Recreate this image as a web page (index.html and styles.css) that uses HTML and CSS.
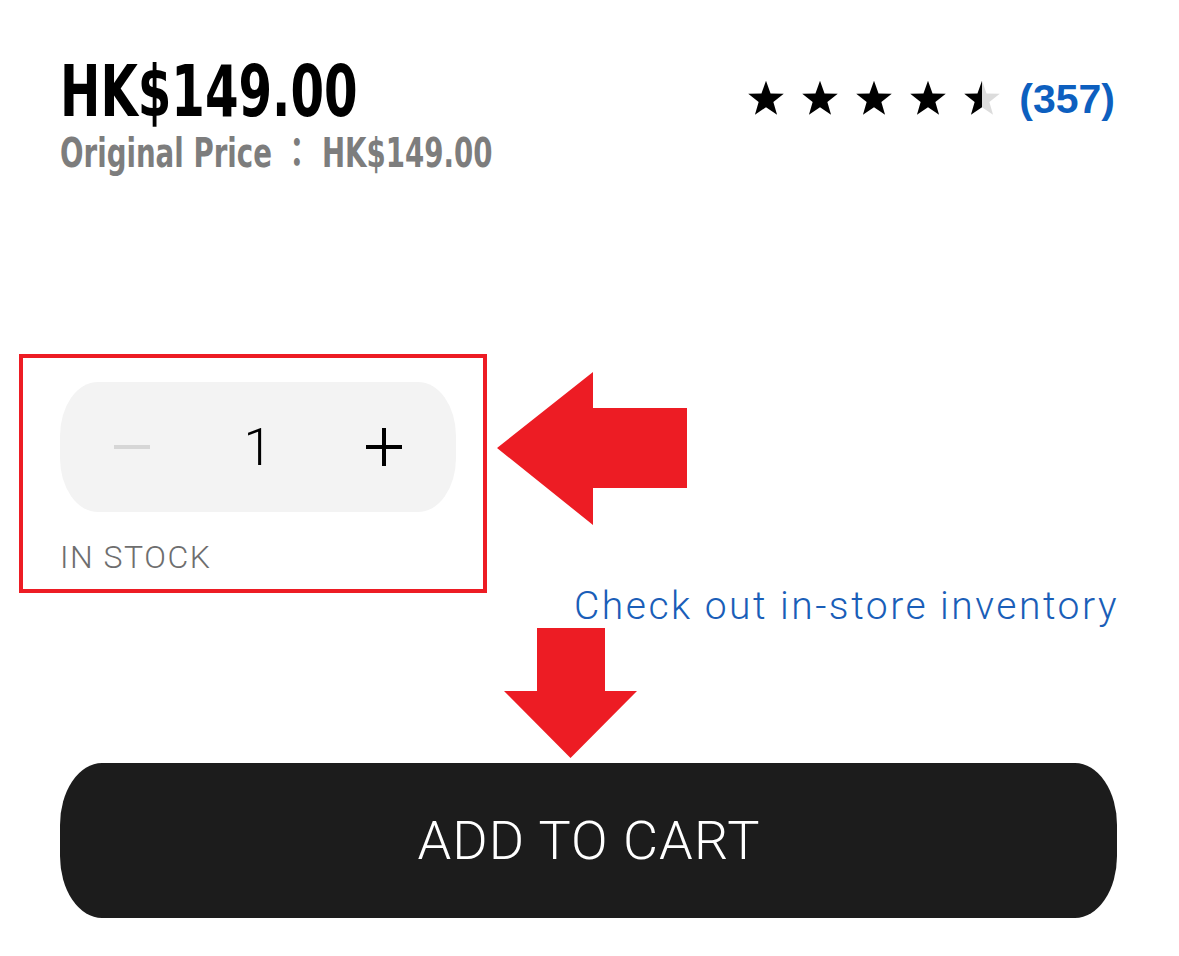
FILE: index.html
```html
<!DOCTYPE html>
<html lang="en">
<head>
    <meta charset="UTF-8">
    <meta name="viewport" content="width=device-width, initial-scale=1.0">
    <title>Product - Add to cart</title>
    <link rel="stylesheet" href="styles.css">
</head>
<body>
    <div class="page">
        <div class="price-row">
            <div class="prices">
                <div class="price"><span class="narrow">HK$149.00</span></div>
                <div class="original-price"><span class="narrow">Original Price ： HK$149.00</span></div>
            </div>
            <div class="rating">
                <div class="stars">
                    <svg class="star" viewBox="0 0 24 23"><path d="M12 0.5l2.75 7.6 8 .25-6.3 4.95 2.25 7.7L12 16.5 5.3 21l2.25-7.7L1.25 8.35l8-.25z" fill="#000"/></svg>
                    <svg class="star" viewBox="0 0 24 23"><path d="M12 0.5l2.75 7.6 8 .25-6.3 4.95 2.25 7.7L12 16.5 5.3 21l2.25-7.7L1.25 8.35l8-.25z" fill="#000"/></svg>
                    <svg class="star" viewBox="0 0 24 23"><path d="M12 0.5l2.75 7.6 8 .25-6.3 4.95 2.25 7.7L12 16.5 5.3 21l2.25-7.7L1.25 8.35l8-.25z" fill="#000"/></svg>
                    <svg class="star" viewBox="0 0 24 23"><path d="M12 0.5l2.75 7.6 8 .25-6.3 4.95 2.25 7.7L12 16.5 5.3 21l2.25-7.7L1.25 8.35l8-.25z" fill="#000"/></svg>
                    <svg class="star" viewBox="0 0 24 23">
                        <defs>
                            <linearGradient id="half">
                                <stop offset="50%" stop-color="#000"/>
                                <stop offset="50%" stop-color="#dcdcdc"/>
                            </linearGradient>
                        </defs>
                        <path d="M12 0.5l2.75 7.6 8 .25-6.3 4.95 2.25 7.7L12 16.5 5.3 21l2.25-7.7L1.25 8.35l8-.25z" fill="url(#half)"/>
                    </svg>
                </div>
                <a class="review-count" href="#">(357)</a>
            </div>
        </div>

        <div class="qty">
            <div class="qty-stepper">
                <button class="step-btn minus" disabled><span class="bar"></span></button>
                <span class="qty-value">1</span>
                <button class="step-btn plus"><span class="bar"></span><span class="bar vertical"></span></button>
            </div>
            <div class="stock">IN STOCK</div>
            <!-- annotation layer -->
            <div class="mark-box"></div>
            <svg class="mark-arrow-left" viewBox="0 0 190 153"><polygon points="0,76 96,0 96,36 190,36 190,116 96,116 96,153" fill="#ed1c24"/></svg>
        </div>

        <div class="store-row">
            <a class="store-link" href="#">Check out in-store inventory</a>
        </div>

        <div class="cart-wrap">
            <svg class="mark-arrow-down" viewBox="0 0 133 130"><polygon points="33,0 101,0 101,63 133,63 66.5,130 0,63 33,63" fill="#ed1c24"/></svg>
            <button class="cart-btn">ADD TO CART</button>
        </div>
    </div>
</body>
</html>
```

FILE: styles.css
```css
body {
    margin: 0;
    background-color: #fff;
    font-family: Roboto, "Liberation Sans", sans-serif;
}
.page {
    padding: 0 62px 0 60px;
}
.price-row {
    display: flex;
    justify-content: space-between;
    align-items: flex-start;
    padding-top: 55px;
}
.narrow {
    display: inline-block;
    transform-origin: left center;
    white-space: nowrap;
}
.price {
    font-family: "DejaVu Sans Condensed", "DejaVu Sans", sans-serif;
    font-weight: bold;
    font-size: 72px;
    line-height: 72px;
    color: #000;
}
.price .narrow {
    transform: scaleX(0.745);
}
.original-price {
    margin-top: 2px;
    font-family: "DejaVu Sans Condensed", "DejaVu Sans", "Noto Sans CJK TC", sans-serif;
    font-weight: bold;
    font-size: 41px;
    line-height: 49px;
    color: #7d7d7d;
}
.original-price .narrow {
    transform: scaleX(0.75);
}
.rating {
    display: flex;
    align-items: center;
    gap: 17px;
    margin-top: 21px;
    margin-right: 2px;
}
.stars {
    display: flex;
    gap: 14px;
}
.star {
    display: block;
    width: 40px;
    height: 38px;
}
.review-count {
    font-family: "Liberation Sans", Arial, sans-serif;
    font-weight: bold;
    font-size: 41px;
    line-height: 46px;
    color: #0d5fbf;
    text-decoration: none;
}
.qty {
    position: relative;
    margin-top: 204px;
}
.qty-stepper {
    display: flex;
    align-items: center;
    justify-content: space-between;
    width: 396px;
    height: 130px;
    box-sizing: border-box;
    padding: 0 54px;
    background-color: #f3f3f3;
    border-radius: 38px / 54px;
}
.step-btn {
    position: relative;
    width: 36px;
    height: 38px;
    padding: 0;
    border: none;
    background: none;
    cursor: pointer;
}
.step-btn .bar {
    position: absolute;
    left: 0;
    top: 17px;
    width: 36px;
    height: 4px;
    background-color: #000;
}
.step-btn .bar.vertical {
    left: 16px;
    top: 0;
    width: 4px;
    height: 38px;
}
.step-btn.minus .bar {
    background-color: #d6d6d6;
}
.step-btn:disabled {
    cursor: not-allowed;
}
.qty-value {
    font-weight: 300;
    font-size: 52px;
    color: #000;
}
.stock {
    margin-top: 26px;
    font-weight: 300;
    font-size: 32px;
    line-height: 38px;
    letter-spacing: 1.5px;
    color: #6e6e6e;
}
.mark-box {
    position: absolute;
    left: -41px;
    top: -28px;
    width: 468px;
    height: 239px;
    box-sizing: border-box;
    border: 4px solid #ed1c24;
}
.mark-arrow-left {
    position: absolute;
    left: 437px;
    top: -10px;
    width: 190px;
    height: 153px;
}
.store-row {
    display: flex;
    justify-content: flex-end;
    margin-top: 7px;
}
.store-link {
    font-weight: 300;
    font-size: 39px;
    line-height: 47px;
    letter-spacing: 2.5px;
    margin-right: -2px;
    color: #1a5eb8;
    text-decoration: none;
}
.cart-wrap {
    position: relative;
    margin-top: 133px;
}
.mark-arrow-down {
    position: absolute;
    left: 444px;
    top: -135px;
    width: 133px;
    height: 130px;
}
.cart-btn {
    display: block;
    width: 100%;
    height: 155px;
    padding: 0 0 0 1px;
    border: none;
    border-radius: 42px / 62px;
    background-color: #1c1c1c;
    color: #fff;
    font-family: Roboto, "Liberation Sans", sans-serif;
    font-weight: 300;
    font-size: 54px;
    letter-spacing: 1.1px;
    cursor: pointer;
}
```
